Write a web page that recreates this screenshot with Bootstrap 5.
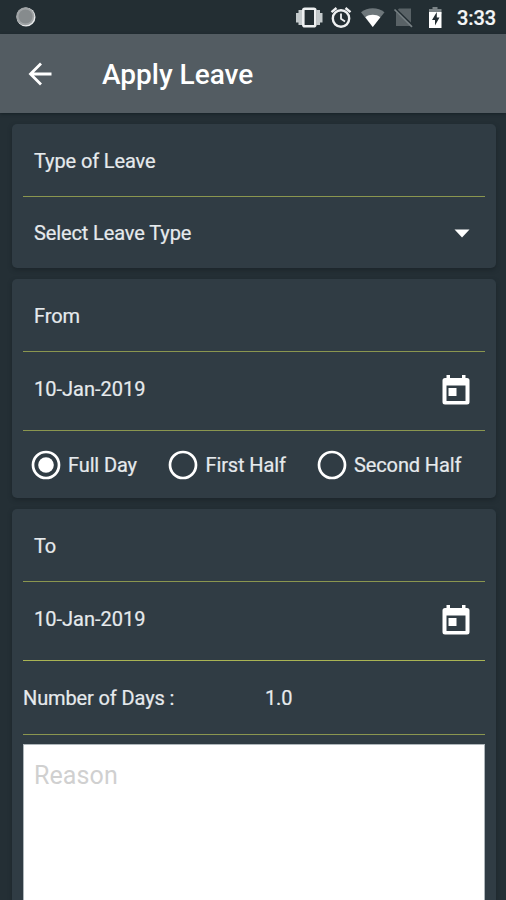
<!DOCTYPE html>
<html lang="en">
<head>
<meta charset="utf-8">
<meta name="viewport" content="width=device-width, initial-scale=1">
<title>Apply Leave</title>
<link href="https://cdn.jsdelivr.net/npm/bootstrap@5.3.0/dist/css/bootstrap.min.css" rel="stylesheet">
<style>
body{background:#242f35;font-family:Roboto,"Liberation Sans",sans-serif;font-size:20px;line-height:24px;letter-spacing:-.12px;color:#e6eaed;height:900px;overflow:hidden}
.statusbar{height:34px;background:#232e33}
.dot{width:20px;height:20px;margin-left:16px}
.clock{font-size:20px;font-weight:500;color:#f4f6f7;width:39px;white-space:nowrap;margin:2px 10px 0 8px}
.appbar{height:79px;background:#535c62;box-shadow:0 1px 3px #162026;position:relative}
.appbar h1{font-size:28px;line-height:32px;font-weight:500;letter-spacing:0;color:#fff;margin:2px 0 0 48px}
.back{margin-left:26px}
.stack{padding:11px 10.5px 0 12px;gap:11px}
.panel{background:#303c44;border:0;border-radius:5px;padding:0 11px;color:inherit;box-shadow:0 2px 4px #1c262b}
.panel,.clock{-webkit-text-stroke:.2px currentColor}
.line{border-bottom:1px solid #8a964f}
.line-bright{border-color:#a9b454}
.cell{padding:0 11px}
.h-label{height:73px;padding-top:2px}
.h-select{height:71px;padding-top:1px}
.h-date{height:79px;padding-bottom:2px}
.h-date span{padding-bottom:2px;letter-spacing:0}
.h-radio{height:67px;padding-left:7.5px}
.h-days{height:74px}
.choice{gap:7.5px}
.choice-a{width:137.5px}
.choice-b{width:148.5px}
.days-label{width:242px}
.reason{height:170px;border-radius:0;border:1px solid #aeb6ba;border-bottom:0;background:#fff;margin-top:9px;padding:17px 10px;font-size:25px;line-height:28px;letter-spacing:.1px;resize:none;-webkit-text-stroke:0}
.reason::placeholder{color:#d0d0d0;opacity:1}
</style>
</head>
<body>
<div class="statusbar d-flex align-items-center justify-content-between">
  <svg class="dot" viewBox="0 0 20 20"><circle cx="10" cy="10" r="9.500" fill="#e8eaeb"/><circle cx="9.300" cy="9.300" r="9" fill="#a0a4a6"/><circle cx="9.500" cy="9.500" r="7" fill="#868b8d"/></svg>
  <div class="d-flex align-items-center">
    <svg width="154" height="34" viewBox="-1 0 154 34">
      <g fill="#c3c9cb">
        <path d="M0 13h2.500v9.500H0zM2.500 10h3.500v15H2.500zM20.500 10h3.500v15h-3.500zM24 13h2.500v9.500H24z"/>
        <rect x="7.300" y="8.800" width="12" height="17.400" rx="1.500" fill="none" stroke="#eef0f1" stroke-width="2.600"/>
        <circle cx="45" cy="18.500" r="8.200" fill="none" stroke="#eef0f1" stroke-width="2.400"/>
        <path d="M45 13.500v5.300l4 2.600" fill="none" stroke="#eef0f1" stroke-width="1.800"/>
        <path d="M35.500 12.200l5-4.200M54.500 12.200l-5-4.200" stroke="#eef0f1" stroke-width="2.400"/>
      </g>
      <path d="M65 12.300C71.500 7 82 7 88.500 12.300L76.700 27z" fill="#6e777b"/>
      <path d="M69.300 17.200C73.500 14 80 14 84.300 17.200L76.800 27z" fill="#fff"/>
      <path d="M103 8.500h12v17.500h-15V12z" fill="#596266"/>
      <path d="M99.500 9.500l18 17.500" stroke="#232e33" stroke-width="3"/>
      <path d="M98.500 9.500l17.500 17.300" stroke="#778084" stroke-width="1.700"/>
      <path d="M133 9h3.500V7h5V9h4v5H133z" fill="#7c8487"/>
      <path d="M133 12h12.500v16H133z" fill="#fff"/>
      <path d="M140.800 12l-4.800 8h3v5.500l4.500-8h-2.700z" fill="#232e33"/>
    </svg>
    <span class="clock">3:33</span>
  </div>
</div>
<header class="appbar d-flex align-items-center">
  <svg class="back" width="28" height="28" viewBox="0 0 28 28" fill="none" stroke="#fff" stroke-width="2.800"><path d="M25.500 14H4.500M15 3.500L4.500 14 15 24.500"/></svg>
  <h1 class="mb-0">Apply Leave</h1>
</header>
<main class="stack d-flex flex-column">
  <section class="card panel">
    <div class="line cell h-label d-flex align-items-center">Type of Leave</div>
    <div class="cell h-select d-flex align-items-center justify-content-between">
      <span>Select Leave Type</span>
      <svg class="me-1" width="16" height="9" viewBox="0 0 16 9"><path d="M.5.500h15L8 8.500z" fill="#fff"/></svg>
    </div>
  </section>
  <section class="card panel">
    <div class="line cell h-label d-flex align-items-center">From</div>
    <div class="line cell h-date d-flex align-items-center justify-content-between">
      <span>10-Jan-2019</span>
      <svg class="me-1" width="28" height="30" viewBox="0 0 28 30"><path fill="#fff" fill-rule="evenodd" d="M4.500 0h3.500v3h12V0h3.500v3H25q2.500 0 2.500 2.500v21.500q0 2.500-2.500 2.500H3Q.500 29.500.500 27V5.500Q.500 3 3 3h1.500zM4.500 10.500v15.500h19V10.500z"/><path fill="#fff" d="M6.500 13h8v8h-8z"/></svg>
    </div>
    <div class="h-radio d-flex align-items-center">
      <div class="choice choice-a d-flex align-items-center"><svg width="30" height="30" viewBox="0 0 30 30"><circle cx="15" cy="15" r="13" fill="none" stroke="#fff" stroke-width="2.700"/><circle cx="15" cy="15" r="7.800" fill="#fff"/></svg><span>Full Day</span></div>
      <div class="choice choice-b d-flex align-items-center"><svg width="30" height="30" viewBox="0 0 30 30"><circle cx="15" cy="15" r="13" fill="none" stroke="#fff" stroke-width="2.700"/></svg><span>First Half</span></div>
      <div class="choice d-flex align-items-center"><svg width="30" height="30" viewBox="0 0 30 30"><circle cx="15" cy="15" r="13" fill="none" stroke="#fff" stroke-width="2.700"/></svg><span>Second Half</span></div>
    </div>
  </section>
  <section class="card panel">
    <div class="line cell h-label d-flex align-items-center">To</div>
    <div class="line line-bright cell h-date d-flex align-items-center justify-content-between">
      <span>10-Jan-2019</span>
      <svg class="me-1" width="28" height="30" viewBox="0 0 28 30"><path fill="#fff" fill-rule="evenodd" d="M4.500 0h3.500v3h12V0h3.500v3H25q2.500 0 2.500 2.500v21.500q0 2.500-2.500 2.500H3Q.500 29.500.500 27V5.500Q.500 3 3 3h1.500zM4.500 10.500v15.500h19V10.500z"/><path fill="#fff" d="M6.500 13h8v8h-8z"/></svg>
    </div>
    <div class="line h-days d-flex align-items-center"><span class="days-label">Number of Days :</span><span>1.0</span></div>
    <textarea class="form-control reason shadow-none" placeholder="Reason"></textarea>
  </section>
</main>
<script src="https://cdn.jsdelivr.net/npm/bootstrap@5.3.0/dist/js/bootstrap.bundle.min.js"></script>
</body>
</html>
